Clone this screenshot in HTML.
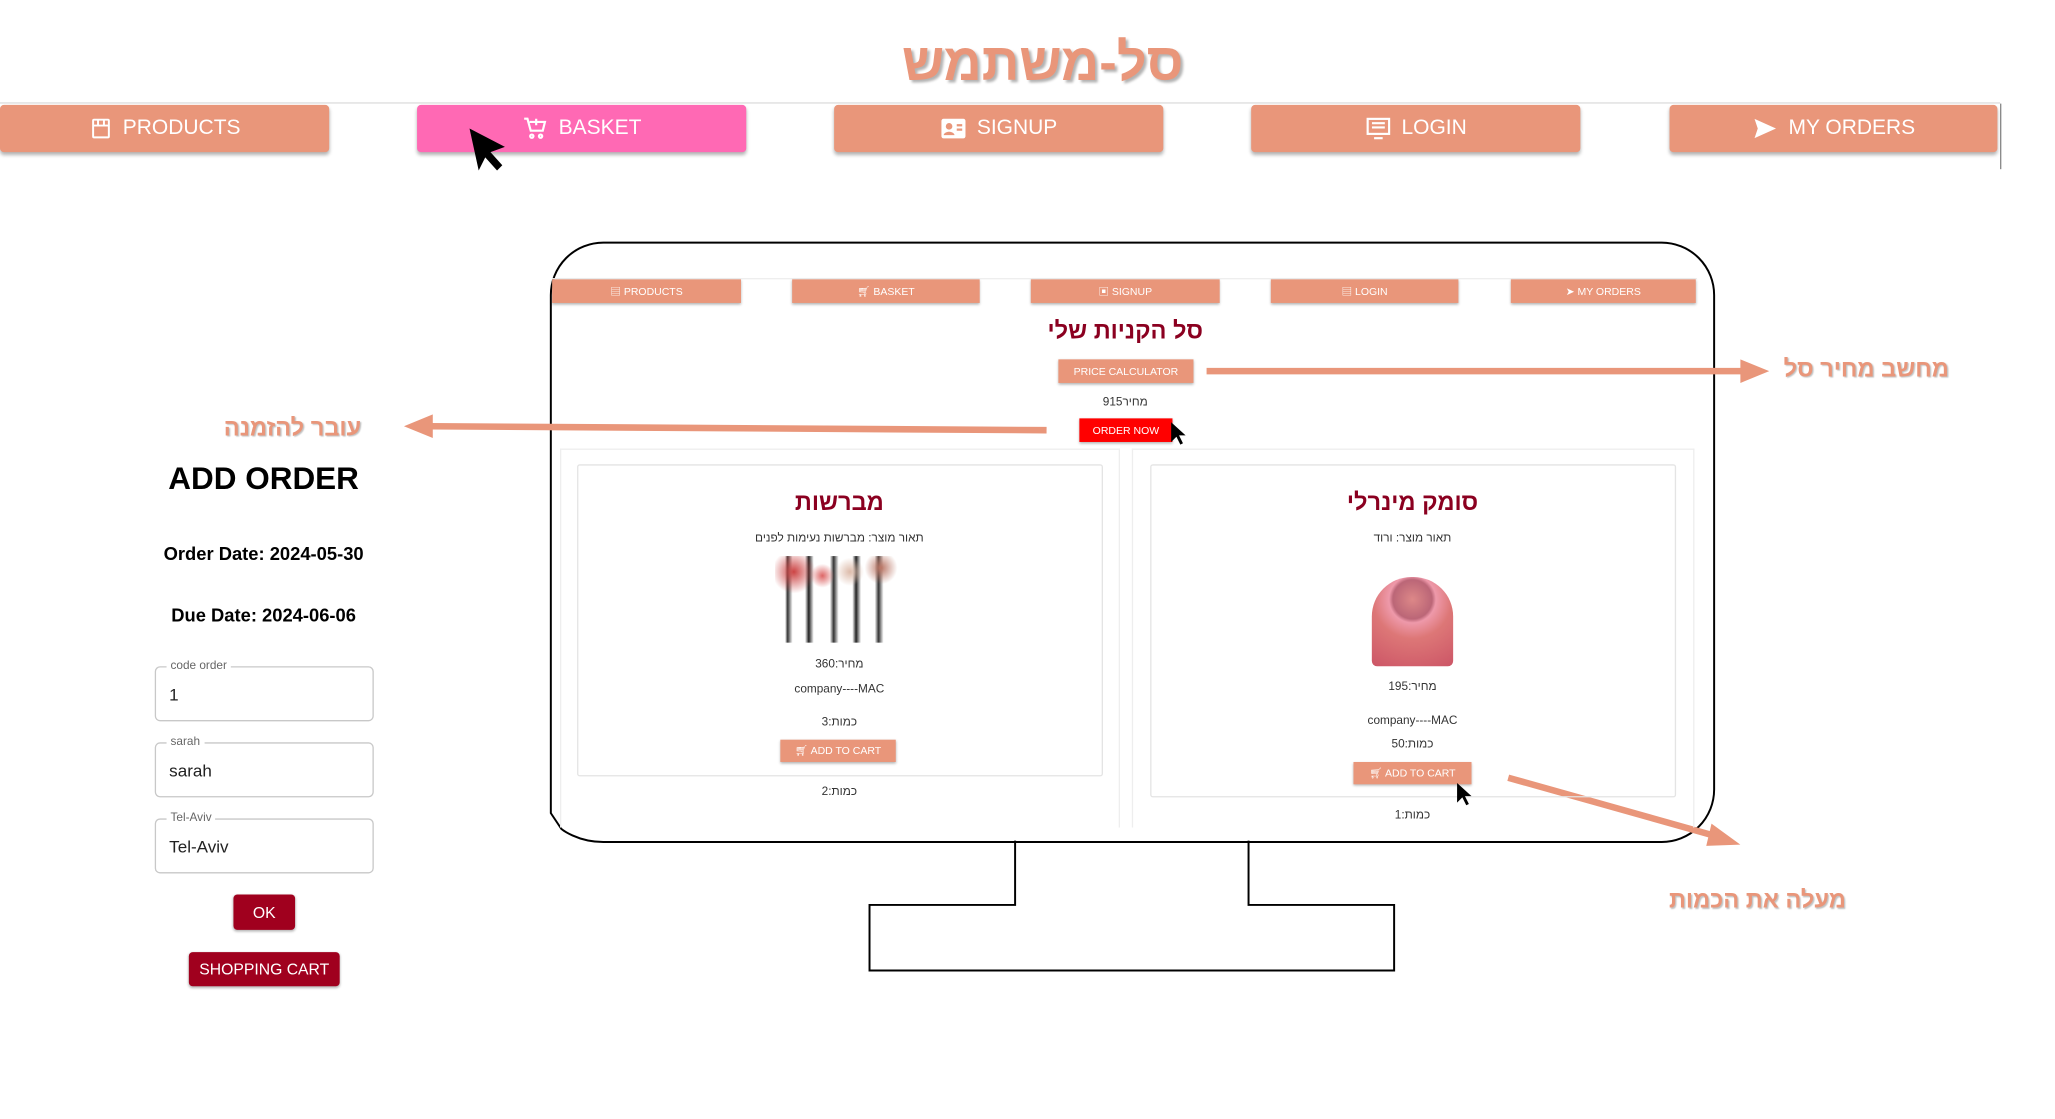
<!DOCTYPE html>
<html><head><meta charset="utf-8">
<style>
html,body{margin:0;padding:0;background:#fff;width:2055px;height:1119px;overflow:hidden}
#w{position:absolute;left:0;top:0;width:1545px;height:841px;transform:scale(1.3115);transform-origin:0 0;font-family:"Liberation Sans","Noto Sans CJK SC",sans-serif}
.a{position:absolute}
.nb{position:absolute;top:80px;height:36px;width:251px;background:#e9967a;color:#fff;font-size:16px;display:flex;align-items:center;justify-content:center;gap:8px;border-radius:3px;box-shadow:0 2px 3px rgba(0,0,0,.3)}
.sb{position:absolute;top:213px;height:18px;background:#e9967a;color:#fff;font-size:8px;display:flex;align-items:center;justify-content:center;gap:4px;box-shadow:0 1px 2px rgba(0,0,0,.3)}
.c{position:absolute;text-align:center;transform:translateX(-50%);white-space:nowrap}
.t{font-size:9px;color:#333}
.h{font-size:18px;font-weight:bold;color:#8b0020}
.lab{font-size:18px;font-weight:bold;color:#e9967a;text-shadow:1px 1px 1px rgba(0,0,0,.25)}
.inp{position:absolute;left:118px;width:165px;height:40px;border:1px solid #c8c8c8;border-radius:4px}
.inp span{position:absolute;left:8px;top:-7px;background:#fff;padding:0 3px;font-size:9px;color:#666}
.inp b{position:absolute;left:10px;top:13px;font-weight:normal;font-size:13px;color:#222}
.btn{position:absolute;background:#a0001e;color:#fff;font-size:12px;display:flex;align-items:center;justify-content:center;border-radius:3px;box-shadow:0 1px 2px rgba(0,0,0,.3)}
</style></head><body><div id="w">
<div class="c" style="left:795px;top:26px;font-size:40px;font-weight:bold;color:#e9967a;text-shadow:2px 2px 2px rgba(0,0,0,.3)">סל-משתמש</div>
<div class="a" style="left:0;top:78px;width:1525px;height:1px;background:#ddd"></div>
<div class="a" style="left:1525px;top:79px;width:1px;height:50px;background:#888"></div>
<div class="nb" style="left:0">
<svg width="18" height="18" viewBox="0 0 24 24" fill="none" stroke="#fff" stroke-width="2"><rect x="4" y="3" width="16" height="18" rx="1"/><path d="M4 9h16M9 3v6M15 3v6"/></svg>PRODUCTS</div>
<div class="nb" style="left:318px;background:#ff69b4">
<svg width="20" height="20" viewBox="0 0 24 24" fill="none" stroke="#fff" stroke-width="2"><path d="M2 3h3l3 11h11l2-8H7M13 3v6M10 6h6"/><circle cx="9" cy="19" r="1.5"/><circle cx="17" cy="19" r="1.5"/></svg>BASKET</div>
<div class="nb" style="left:636px">
<svg width="20" height="18" viewBox="0 0 24 20"><rect x="1" y="1" width="22" height="18" rx="2" fill="#fff"/><circle cx="8" cy="8" r="3" fill="#e9967a"/><path d="M3 16c1-4 9-4 10 0z" fill="#e9967a"/><path d="M15 7h5M15 11h5" stroke="#e9967a" stroke-width="2"/></svg>SIGNUP</div>
<div class="nb" style="left:954px">
<svg width="20" height="18" viewBox="0 0 24 22" fill="none" stroke="#fff" stroke-width="2"><rect x="2" y="2" width="20" height="14"/><path d="M6 6h12M6 10h12M8 20h8"/></svg>LOGIN</div>
<div class="nb" style="left:1273px;width:250px">
<svg width="20" height="18" viewBox="0 0 24 22"><path d="M2 2l20 9-20 9 3-9z" fill="#fff"/></svg>MY ORDERS</div>
<svg class="a" style="left:355px;top:96px" width="40" height="38" viewBox="0 0 40 38"><path d="M3 2l7 32 5-10 9 10 4-4-9-10 11-4z" fill="#000"/></svg>

<svg class="a" style="left:0;top:0" width="1545" height="841">
<path d="M460 185H1267a40 40 0 0 1 40 40V602a40 40 0 0 1-40 40H460C440 642 428 632 428 632L420 620V225a40 40 0 0 1 40-40z" fill="none" stroke="#000" stroke-width="1.5"/>
<path d="M774 641V690H663V740H1063V690H952V641" fill="none" stroke="#000" stroke-width="1.5"/>
<line x1="920" y1="283" x2="1330" y2="283" stroke="#e9967a" stroke-width="5"/>
<path d="M1327 274l22 9-22 9z" fill="#e9967a"/>
<line x1="798" y1="328" x2="328" y2="325" stroke="#e9967a" stroke-width="5"/>
<path d="M330 316l-22 9 22 9z" fill="#e9967a"/>
<line x1="1150" y1="593" x2="1310" y2="638" stroke="#e9967a" stroke-width="5"/>
<path d="M1305 628l22 16-26 1z" fill="#e9967a"/>
</svg>
<div class="c lab" style="left:1423px;top:271px">מחשב מחיר סל</div>
<div class="c lab" style="left:223px;top:316px">עובר להזמנה</div>
<div class="c lab" style="left:1340px;top:676px">מעלה את הכמות</div>

<div class="a" style="left:421px;top:212px;width:873px;height:1px;background:#eee"></div>
<div class="sb" style="left:421px;width:144px">▤ PRODUCTS</div>
<div class="sb" style="left:604px;width:143px">🛒︎ BASKET</div>
<div class="sb" style="left:786px;width:144px">▣ SIGNUP</div>
<div class="sb" style="left:969px;width:143px">▤ LOGIN</div>
<div class="sb" style="left:1152px;width:141px">➤ MY ORDERS</div>
<div class="c h" style="left:858px;top:242px">סל הקניות שלי</div>
<div class="sb" style="left:807px;width:103px;top:274px">PRICE CALCULATOR</div>
<div class="c t" style="left:858px;top:301px">מחיר915</div>
<div class="sb" style="left:823px;width:71px;top:319px;background:#f00">ORDER NOW</div>
<svg class="a" style="left:892px;top:321px" width="14" height="20"><path d="M1 1v15l4-4 3 6 2-1-3-6h5z" fill="#000"/></svg>

<div class="a" style="left:427px;top:342px;width:425px;height:288px;border:1px solid #eee;border-bottom:none"></div>
<div class="a" style="left:863px;top:342px;width:427px;height:288px;border:1px solid #eee;border-bottom:none"></div>
<div class="a" style="left:440px;top:354px;width:399px;height:236px;border:1px solid #e4e4e4;border-radius:2px"></div>
<div class="a" style="left:877px;top:354px;width:399px;height:252px;border:1px solid #e4e4e4;border-radius:2px"></div>

<div class="c h" style="left:640px;top:373px">מברשות</div>
<div class="c t" style="left:640px;top:405px">תאור מוצר: מברשות נעימות לפנים</div>
<div class="a" style="left:591px;top:424px;width:95px;height:66px;background:linear-gradient(90deg,#fff 0,#fff 8%,#333 10%,#fff 14%,#fff 24%,#222 27%,#fff 31%,#fff 44%,#333 47%,#fff 51%,#fff 62%,#222 65%,#fff 69%,#fff 80%,#333 83%,#fff 87%);"></div>
<div class="a" style="left:591px;top:424px;width:95px;height:30px;background:radial-gradient(circle at 15% 40%,#c44 0,transparent 20%),radial-gradient(circle at 38% 50%,#d66 0,transparent 15%),radial-gradient(circle at 60% 40%,#dba 0,transparent 18%),radial-gradient(circle at 85% 30%,#b76 0,transparent 15%)"></div>
<div class="c t" style="left:640px;top:501px">מחיר:360</div>
<div class="c t" style="left:640px;top:520px">company----MAC</div>
<div class="c t" style="left:640px;top:545px">כמות:3</div>
<div class="sb" style="left:595px;width:88px;top:564px;height:17px">🛒︎ ADD TO CART</div>
<div class="c t" style="left:640px;top:598px">כמות:2</div>

<div class="c h" style="left:1077px;top:373px">סומק מינרלי</div>
<div class="c t" style="left:1077px;top:405px">תאור מוצר: ורוד</div>
<div class="a" style="left:1046px;top:440px;width:62px;height:68px;border-radius:30px 30px 4px 4px;background:radial-gradient(circle at 50% 25%,#d88 0,#b67 25%,#e9a 30%,#d77 50%,#c56 100%)"></div>
<div class="c t" style="left:1077px;top:518px">מחיר:195</div>
<div class="c t" style="left:1077px;top:544px">company----MAC</div>
<div class="c t" style="left:1077px;top:562px">כמות:50</div>
<div class="sb" style="left:1032px;width:90px;top:581px;height:17px">🛒︎ ADD TO CART</div>
<svg class="a" style="left:1110px;top:596px" width="14" height="20"><path d="M1 1v15l4-4 3 6 2-1-3-6h5z" fill="#000"/></svg>
<div class="c t" style="left:1077px;top:616px">כמות:1</div>

<div class="c" style="left:201px;top:352px;font-size:24px;font-weight:bold;color:#000">ADD ORDER</div>
<div class="c" style="left:201px;top:414px;font-size:14px;font-weight:bold;color:#000">Order Date: 2024-05-30</div>
<div class="c" style="left:201px;top:461px;font-size:14px;font-weight:bold;color:#000">Due Date: 2024-06-06</div>
<div class="inp" style="top:508px"><span>code order</span><b>1</b></div>
<div class="inp" style="top:566px"><span>sarah</span><b>sarah</b></div>
<div class="inp" style="top:624px"><span>Tel-Aviv</span><b>Tel-Aviv</b></div>
<div class="btn" style="left:178px;top:682px;width:47px;height:27px">OK</div>
<div class="btn" style="left:144px;top:726px;width:115px;height:26px">SHOPPING CART</div>
</div></body></html>
